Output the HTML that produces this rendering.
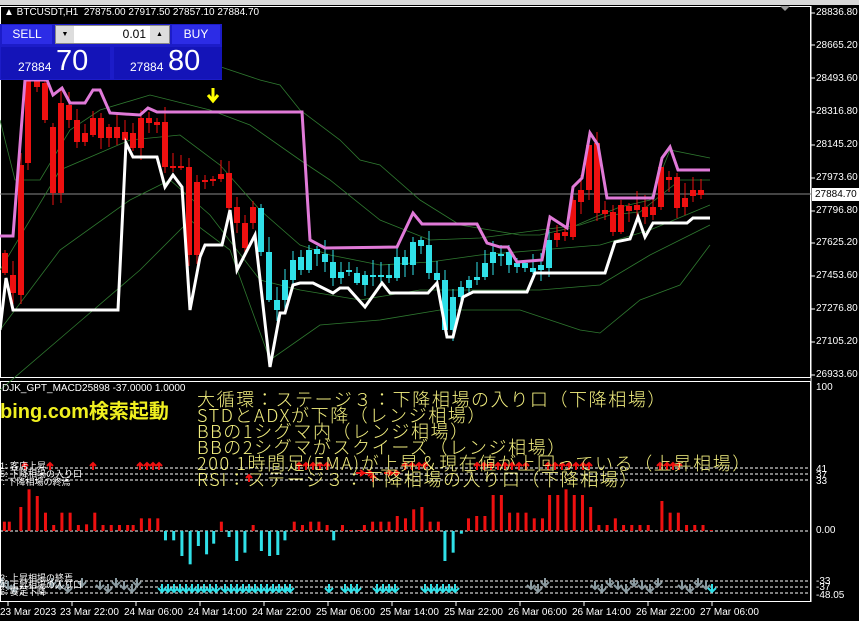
<!DOCTYPE html>
<html><head><meta charset="utf-8"><style>
html,body{margin:0;padding:0;background:#000;width:859px;height:621px;overflow:hidden;font-family:"Liberation Sans","Noto Sans CJK JP",sans-serif}
#wrap{position:relative;width:859px;height:621px}
svg{position:absolute;left:0;top:0}
.ax{position:absolute;left:816px;color:#fff;font-size:10px;line-height:10px}
.tl{position:absolute;top:607px;color:#fff;font-size:10px;white-space:nowrap}
.jp{position:absolute;left:197px;color:#f4f080;font-family:"Noto Sans CJK JP",sans-serif;font-weight:300;font-size:18px;line-height:15.6px;white-space:nowrap;letter-spacing:1.6px}
</style></head><body><div id="wrap">
<svg id="s" width="859" height="621" xmlns="http://www.w3.org/2000/svg">
<rect x="0" y="0" width="859" height="5" fill="#d8d8d8"/>
<rect x="0.5" y="6.5" width="810" height="371" fill="none" stroke="#fff"/>
<rect x="0.5" y="381.5" width="810" height="220" fill="none" stroke="#fff"/>
<line x1="811" y1="6" x2="811" y2="602" stroke="#fff"/>
<line x1="0" y1="194" x2="811" y2="194" stroke="#888"/>
<path d="M780 6 L790 6 L785 11Z" fill="#999"/>
<g id="bands" fill="none" stroke="#2f7a30" stroke-width="0.8"></g>
<g id="candles"></g>
<polyline id="pink" fill="none" stroke="#e07ad8" stroke-width="3"/>
<polyline id="white" fill="none" stroke="#fff" stroke-width="3"/>
<path d="M213 88 L213 99 M208 95 L213 101 L218 95" stroke="#ffff00" stroke-width="3" fill="none"/>
<g stroke="#fff" stroke-dasharray="3,2" stroke-width="1">
<line x1="0" y1="468" x2="811" y2="468"/><line x1="0" y1="474" x2="811" y2="474"/><line x1="0" y1="480" x2="811" y2="480"/>
<line x1="0" y1="531" x2="811" y2="531"/>
<line x1="0" y1="581" x2="811" y2="581"/><line x1="0" y1="587" x2="811" y2="587"/><line x1="0" y1="593" x2="811" y2="593"/>
</g>
<g id="hist"></g>
<g id="arr"></g>
<g id="ticks" stroke="#fff"></g>
</svg>

<div style="position:absolute;left:4px;top:7px;color:#fff;font-size:10px;white-space:nowrap">▲ BTCUSDT,H1&nbsp; 27875.00 27917.50 27857.10 27884.70</div>
<div style="position:absolute;left:0;top:24px;width:222px;height:56px;background:#1c1cc8"></div>
<div style="position:absolute;left:2px;top:25px;width:50px;height:19px;background:#2c2ce6;color:#fff;font-size:12px;text-align:center;line-height:19px">SELL</div>
<div style="position:absolute;left:172px;top:25px;width:48px;height:19px;background:#2c2ce6;color:#fff;font-size:12px;text-align:center;line-height:19px">BUY</div>
<div style="position:absolute;left:55px;top:25px;width:115px;height:19px;background:#fff;border:1px solid #888;box-sizing:border-box"></div>
<div style="position:absolute;left:56px;top:26px;width:18px;height:17px;background:#ddd;font-size:7px;text-align:center;line-height:17px">▼</div>
<div style="position:absolute;left:150px;top:26px;width:19px;height:17px;background:#ddd;font-size:7px;text-align:center;line-height:17px">▲</div>
<div style="position:absolute;left:100px;top:27px;width:46px;color:#000;font-size:12px;text-align:right">0.01</div>
<div style="position:absolute;left:1px;top:47px;width:109px;height:32px;background:#1414b8"></div>
<div style="position:absolute;left:114px;top:47px;width:108px;height:32px;background:#1414b8"></div>
<div style="position:absolute;left:18px;top:60px;color:#fff;font-size:12px">27884</div>
<div style="position:absolute;left:56px;top:45px;color:#fff;font-size:29px">70</div>
<div style="position:absolute;left:130px;top:60px;color:#fff;font-size:12px">27884</div>
<div style="position:absolute;left:168px;top:45px;color:#fff;font-size:29px">80</div>

<div class="ax" style="top:8px">28836.80</div>
<div class="ax" style="top:41px">28665.20</div>
<div class="ax" style="top:74px">28493.60</div>
<div class="ax" style="top:107px">28316.80</div>
<div class="ax" style="top:140px">28145.20</div>
<div class="ax" style="top:173px">27973.60</div>
<div style="position:absolute;left:812px;top:188px;width:47px;height:13px;background:#fff;color:#000;font-size:10px;line-height:13px;padding-left:3px;box-sizing:border-box">27884.70</div>
<div class="ax" style="top:206px">27796.80</div>
<div class="ax" style="top:238px">27625.20</div>
<div class="ax" style="top:271px">27453.60</div>
<div class="ax" style="top:304px">27276.80</div>
<div class="ax" style="top:337px">27105.20</div>
<div class="ax" style="top:370px">26933.60</div>
<div class="ax" style="top:383px">100</div>
<div class="ax" style="top:465px">41</div>
<div class="ax" style="top:471px">37</div>
<div class="ax" style="top:477px">33</div>
<div class="ax" style="top:526px">0.00</div>
<div class="ax" style="top:577px">-33</div>
<div class="ax" style="top:583px">-37</div>
<div class="ax" style="top:591px">-48.05</div>

<div class="tl" style="left:0">23 Mar 2023</div>
<div class="tl" style="left:60px">23 Mar 22:00</div>
<div class="tl" style="left:124px">24 Mar 06:00</div>
<div class="tl" style="left:188px">24 Mar 14:00</div>
<div class="tl" style="left:252px">24 Mar 22:00</div>
<div class="tl" style="left:316px">25 Mar 06:00</div>
<div class="tl" style="left:380px">25 Mar 14:00</div>
<div class="tl" style="left:444px">25 Mar 22:00</div>
<div class="tl" style="left:508px">26 Mar 06:00</div>
<div class="tl" style="left:572px">26 Mar 14:00</div>
<div class="tl" style="left:636px">26 Mar 22:00</div>
<div class="tl" style="left:700px">27 Mar 06:00</div>

<div style="position:absolute;left:2px;top:383px;color:#fff;font-size:10px;white-space:nowrap">DJK_GPT_MACD25898 -37.0000 1.0000</div>
<div style="position:absolute;left:0;top:395px;color:#f0f020;font-size:20px;font-weight:bold;white-space:nowrap">bing.com検索起動</div>
<div style="position:absolute;left:0;top:462px;color:#fff;font-size:9px;line-height:8px;white-space:nowrap">1: 客店上昇<br>5: 下降相場の入り口<br>&nbsp;: 下降相場の終焉</div>
<div style="position:absolute;left:0;top:575px;color:#fff;font-size:9px;line-height:7px;white-space:nowrap">3: 上昇相場の終焉<br>4: 上昇相場の入り口<br>6: 安定下降</div>
<div class="jp" style="top:392px">大循環：ステージ３：下降相場の入り口（下降相場）</div>
<div class="jp" style="top:408px">STDとADXが下降（レンジ相場）</div>
<div class="jp" style="top:424px">BBの1シグマ内（レンジ相場）</div>
<div class="jp" style="top:440px">BBの2シグマがスクイーズ（レンジ相場）</div>
<div class="jp" style="top:456px">200 1時間足(EMA)が上昇＆現在値が上回っている（上昇相場）</div>
<div class="jp" style="top:472px">RSI：ステージ３：下降相場の入り口（下降相場）</div>
</div>
<script>
var NS="http://www.w3.org/2000/svg";
function el(p,t,a){var e=document.createElementNS(NS,t);for(var k in a)e.setAttribute(k,a[k]);document.getElementById(p).appendChild(e);return e;}
function pts(a){return a.map(function(p){return p.join(",")}).join(" ");}
document.getElementById("pink").setAttribute("points",pts([[0,236],[13,236],[25,80],[47,80],[53,95],[62,88],[70,103],[85,103],[93,90],[100,90],[110,113],[140,115],[148,108],[157,112],[302,112],[310,240],[325,248],[397,247],[413,213],[422,224],[477,224],[487,243],[500,247],[508,247],[517,262],[542,260],[550,217],[567,228],[573,187],[582,178],[590,133],[598,145],[607,198],[653,198],[662,158],[670,147],[678,170],[710,170]]));
document.getElementById("white").setAttribute("points",pts([[0,330],[6,278],[13,310],[118,310],[126,143],[133,157],[157,157],[165,187],[173,175],[182,187],[190,310],[200,257],[205,245],[222,245],[230,210],[237,270],[255,235],[270,367],[280,313],[285,313],[293,285],[300,283],[313,283],[333,293],[340,288],[348,288],[365,307],[382,283],[390,293],[428,293],[437,283],[447,337],[453,337],[463,297],[473,292],[527,292],[535,273],[605,273],[615,242],[630,239],[638,217],[645,237],[653,223],[687,223],[693,218],[710,218]]));
var bands=[
[[45,80],[60,60],[100,40],[130,35],[160,50],[200,60],[230,70],[260,80],[280,85],[300,110],[340,140],[360,160],[380,165],[420,200],[460,225],[490,230],[520,235],[540,235],[570,228],[600,215],[620,207],[650,200],[670,150],[710,158]],
[[0,120],[15,180],[40,180],[70,130],[100,110],[150,95],[210,110],[250,125],[300,160],[330,180],[380,220],[430,240],[480,238],[540,230],[580,225],[610,215],[640,212],[680,180],[710,180]],
[[0,270],[60,170],[130,140],[180,135],[220,165],[260,210],[300,245],[330,255],[380,265],[430,262],[480,255],[540,250],[600,245],[650,230],[710,205]],
[[0,330],[60,250],[130,200],[170,180],[210,215],[260,280],[300,290],[360,300],[420,290],[480,290],[540,290],[600,285],[650,255],[710,225]],
[[0,390],[70,330],[140,270],[190,220],[230,250],[270,360],[320,325],[380,320],[440,310],[520,310],[580,330],[600,333],[640,300],[680,285],[710,245]]];
bands.forEach(function(b){el("bands","polyline",{points:pts(b)});});
var R="#ee1010",C="#30e0e8";
var cs=[[5,253,273,R],[13,275,293,R],[21,165,295,R],[28,80,163,R],[37,80,87,R],[45,83,120,R],[53,127,193,R],[61,103,193,R],[69,105,120,R],[77,120,142,R],[85,133,142,R],[93,118,135,R],[101,118,138,R],[109,127,138,R],[117,127,138,R],[125,132,140,R],[133,133,148,R],[141,118,148,R],[149,118,123,R],[157,122,125,R],[165,122,167,R],[173,166,168,R],[181,166,168,R],[189,167,255,R],[197,182,255,R],[205,180,182,R],[213,179,181,R],[221,174,179,R],[229,173,208,R],[237,207,223,R],[245,223,248,R],[253,207,223,R],
[261,208,252,C],[269,252,300,C],[277,300,310,C],[285,280,300,C],[293,260,280,C],[301,257,270,C],[309,250,270,C],[317,249,254,C],[325,254,262,C],[333,262,278,C],[341,272,278,C],[349,270,272,C],[357,273,283,C],[365,275,285,C],[373,275,277,C],[381,275,276,C],[389,275,278,C],[397,257,278,C],[405,257,265,C],[413,242,265,C],[421,240,246,C],[429,245,273,C],[437,273,280,C],[445,280,330,C],[453,297,330,C],[461,287,297,C],[469,280,288,C],[477,277,280,C],[485,263,277,C],[493,252,263,C],[501,254,256,C],[509,252,265,C],[517,263,267,C],[525,263,268,C],[533,268,272,C],[541,265,270,C],[549,240,268,C],
[557,233,240,R],[565,232,236,R],[573,200,237,R],[581,190,202,R],[589,145,190,R],[597,143,213,R],[605,210,214,R],[613,212,232,R],[621,205,232,R],[629,206,211,R],[637,205,210,R],[645,207,217,R],[653,207,215,R],[661,167,207,R],[669,177,180,R],[677,177,208,R],[685,198,207,R],[693,190,196,R],[701,190,195,R]];
cs.forEach(function(c,i){var w=6,h=Math.max(2,c[2]-c[1]);var e=(i*37%13)+3;
el("candles","line",{x1:c[0],x2:c[0],y1:c[1]-e,y2:c[2]+((i*53)%11)+2,stroke:c[3],"stroke-width":1});
el("candles","rect",{x:c[0]-w/2,y:c[1],width:w,height:h,fill:c[3]});});
var hz=[[8,28],[17,28],[38,72],[53,125],[68,105],[83,55],[98,18],[113,55],[128,55],[143,18],[158,20],[173,55],[188,18],[203,18],[218,18],[233,18],[243,18],[258,38],[273,38],[288,38],[302,-28],[317,-28],[332,-75],[347,-100],[362,-45],[377,-70],[390,-38],[404,28],[418,-18],[432,-90],[447,-65],[462,18],[477,-60],[492,-75],[507,-72],[520,-28],[537,28],[552,18],[567,28],[582,28],[597,18],[609,-28],[625,18],[640,3],[655,3],[665,18],[680,28],[695,28],[710,28],[725,45],[740,38],[755,65],[770,72],[785,28],[800,28],[812,-90],[827,-65],[842,-8],[855,38],[870,45],[885,45],[900,108],[915,108],[930,55],[945,55],[960,55],[975,38],[990,38],[1003,108],[1018,108],[1033,125],[1048,108],[1063,108],[1078,72],[1093,18],[1108,18],[1123,38],[1138,18],[1153,18],[1168,18],[1183,18],[1208,90],[1223,55],[1238,55],[1253,18],[1268,18],[1283,18],[1298,3]];
hz.forEach(function(b){var x=b[0]/1.825,h=b[1]/3;el("hist","rect",{x:x-1.5,y:h>0?531-h:531,width:3,height:Math.abs(h),fill:h>0?R:C});});
function up(x,y,col){el("arr","path",{d:"M"+x+" "+(y+7)+" L"+x+" "+y+" M"+(x-3)+" "+(y+3)+" L"+x+" "+y+" L"+(x+3)+" "+(y+3),stroke:col,"stroke-width":2,fill:"none"});}
function dn(x,y,col){el("arr","path",{d:"M"+x+" "+y+" L"+x+" "+(y+8)+" M"+(x-4)+" "+(y+4)+" L"+x+" "+(y+8)+" L"+(x+4)+" "+(y+4),stroke:col,"stroke-width":2,fill:"none"});}
[[25,463],[50,463],[93,463],[140,463],[147,463],[153,463],[159,463],[249,475],[299,463],[306,463],[313,463],[320,463],[327,463],[373,475],[405,463],[412,463],[419,463],[425,463],[477,463],[484,463],[491,463],[498,463],[505,463],[512,463],[519,463],[526,463],[548,463],[555,463],[562,463],[569,463],[576,463],[583,463],[589,463],[660,463],[667,463],[673,463],[679,463]].forEach(function(a){up(a[0],a[1],R);});
[[360,473],[368,473],[388,473],[395,473]].forEach(function(a){el("arr","path",{d:"M"+(a[0]-4)+" "+a[1]+" L"+(a[0]+4)+" "+a[1]+" M"+a[0]+" "+(a[1]-3)+" L"+(a[0]+4)+" "+a[1]+" L"+a[0]+" "+(a[1]+3),stroke:R,"stroke-width":2,fill:"none"});});
var G="#8a9aa0";
[2,8,14,52,60,68,82,100,108,116,124,132,137,531,538,545,595,602,610,618,626,634,642,650,658,682,690,698,706].forEach(function(x,i){dn(x,578+(i%3)*3,G);});
[162,168,174,180,186,192,198,204,210,216,225,231,237,243,249,255,261,267,273,279,285,290,329,345,351,357,377,383,389,395,425,431,437,443,449,455,712].forEach(function(x){dn(x,584,C);});
for(var i=0;i<12;i++){var x=8+i*64;el("ticks","line",{x1:x,x2:x,y1:602,y2:606});}
[13,45,78,112,145,178,211,243,276,309,342,375].forEach(function(y){el("ticks","line",{x1:811,x2:815,y1:y,y2:y});});
</script>
</body></html>
